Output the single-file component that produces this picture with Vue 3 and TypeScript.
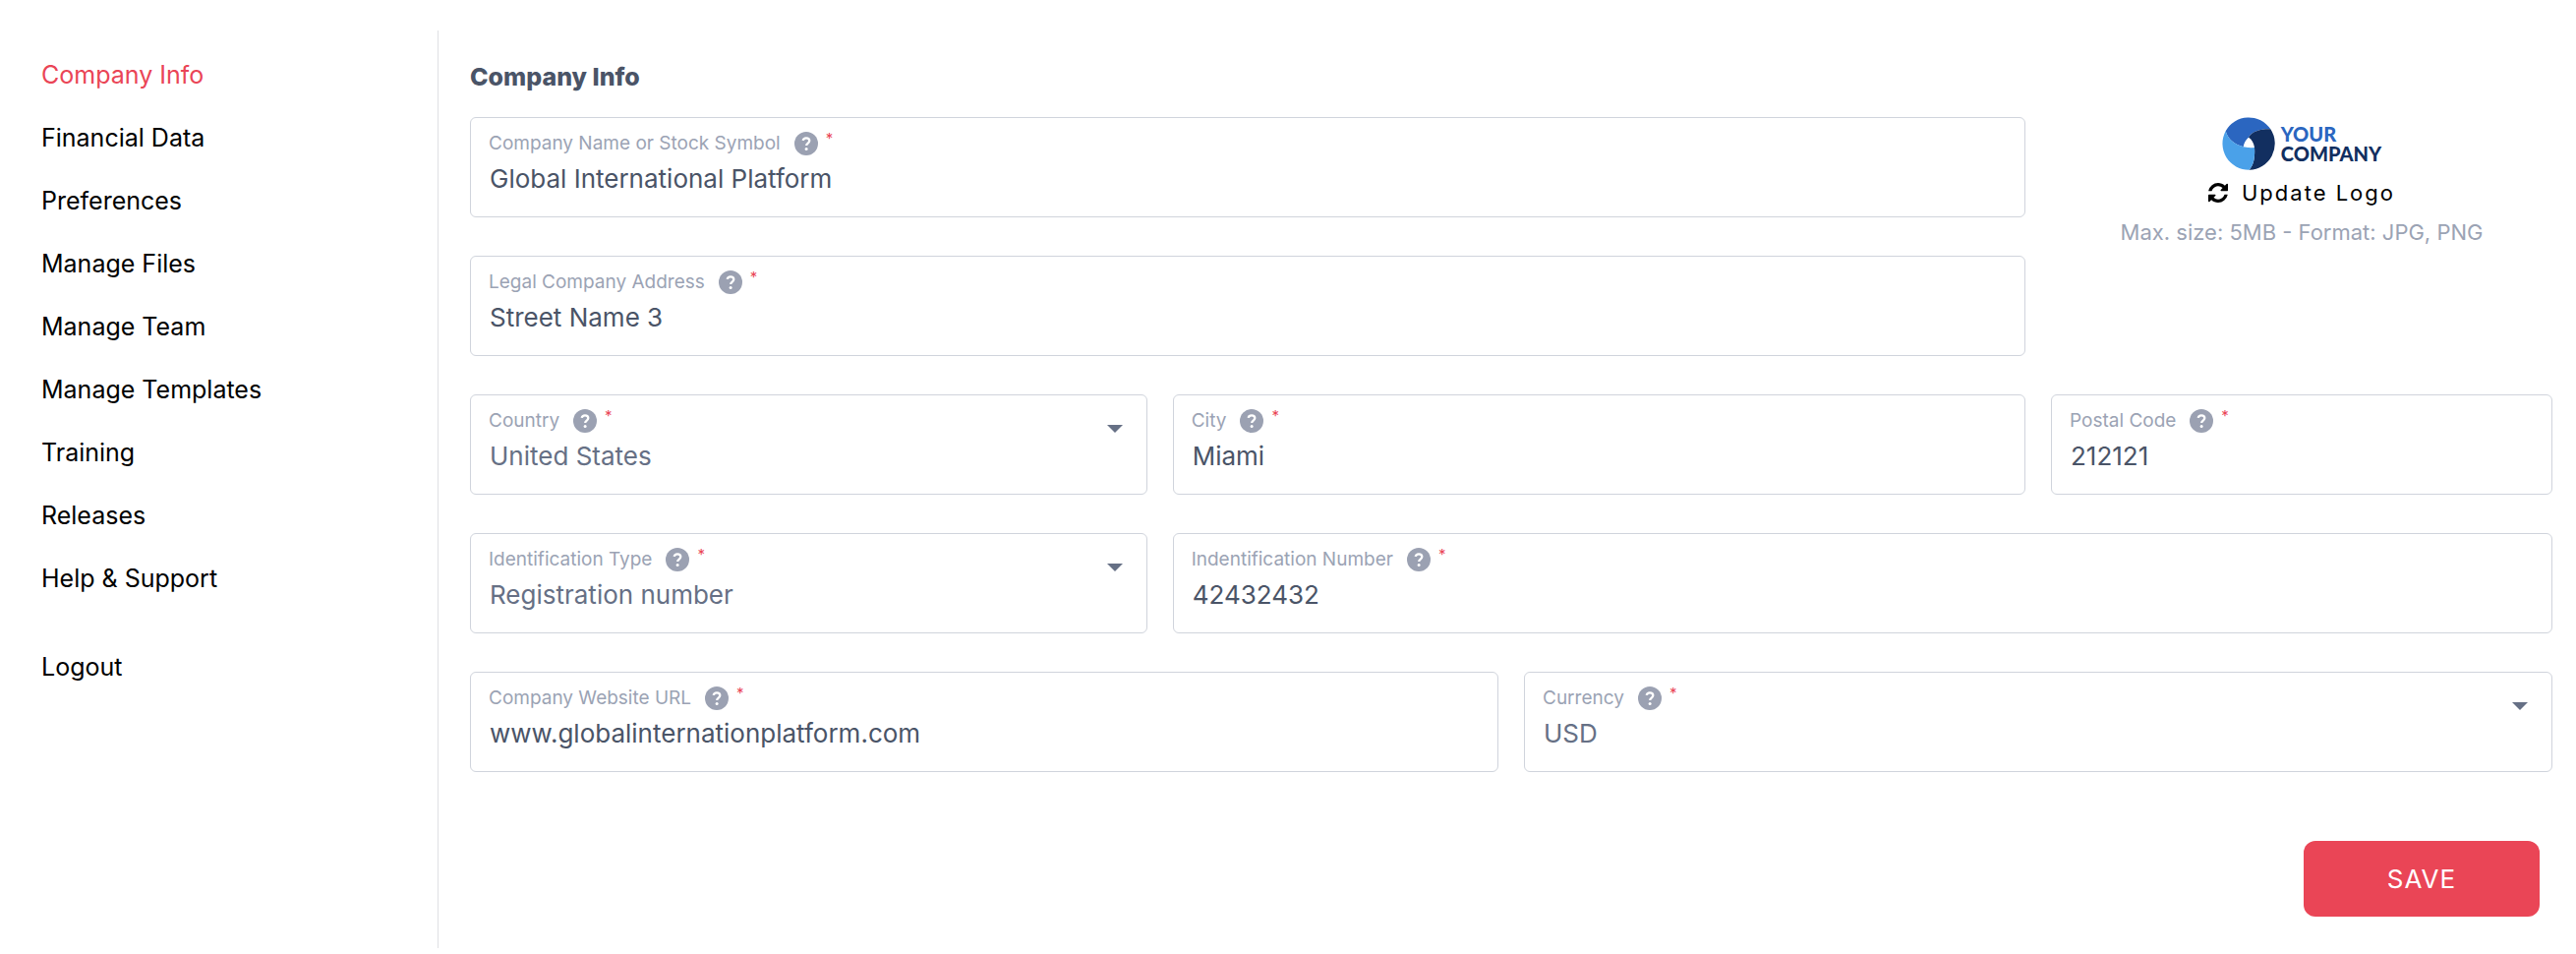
<script setup lang="ts">
import { reactive } from 'vue'

interface Field {
  id: string
  label: string
  kind: 'text' | 'select'
  size: 'three' | 'four' | 'five' | 'six' | 'eight' | 'nine'
  options?: string[]
}

const navItems: string[] = [
  'Company Info',
  'Financial Data',
  'Preferences',
  'Manage Files',
  'Manage Team',
  'Manage Templates',
  'Training',
  'Releases',
  'Help & Support',
]

const fields: Field[] = [
  { id: 'name', label: 'Company Name or Stock Symbol', kind: 'text', size: 'nine' },
  { id: 'address', label: 'Legal Company Address', kind: 'text', size: 'nine' },
  { id: 'country', label: 'Country', kind: 'select', size: 'four', options: ['United States'] },
  { id: 'city', label: 'City', kind: 'text', size: 'five' },
  { id: 'postal', label: 'Postal Code', kind: 'text', size: 'three' },
  { id: 'idType', label: 'Identification Type', kind: 'select', size: 'four', options: ['Registration number'] },
  { id: 'idNumber', label: 'Indentification Number', kind: 'text', size: 'eight' },
  { id: 'website', label: 'Company Website URL', kind: 'text', size: 'six' },
  { id: 'currency', label: 'Currency', kind: 'select', size: 'six', options: ['USD'] },
]

const values = reactive<Record<string, string>>({
  name: 'Global International Platform',
  address: 'Street Name 3',
  country: 'United States',
  city: 'Miami',
  postal: '212121',
  idType: 'Registration number',
  idNumber: '42432432',
  website: 'www.globalinternationplatform.com',
  currency: 'USD',
})
</script>

<template>
  <div class="page">
    <nav class="sidebar" aria-label="Settings">
      <a
        v-for="(item, i) in navItems"
        :key="item"
        href="#"
        class="nav-link"
        :class="{ active: i === 0 }"
      >{{ item }}</a>
      <a href="#" class="nav-link logout">Logout</a>
    </nav>

    <main class="content">
      <h1 class="title">Company Info</h1>
      <form class="form" @submit.prevent>
        <div class="grid">
          <div v-for="field in fields" :key="field.id" class="field" :class="field.size">
            <div class="field-head">
              <label class="field-label" :for="field.id">{{ field.label }}</label>
              <button type="button" class="help" :aria-label="'Help: ' + field.label">
                <svg viewBox="0 0 24 24" aria-hidden="true">
                  <circle cx="12" cy="12" r="12" fill="currentColor" />
                  <path
                    d="M8.7 8.9C9 7.200 10.200 6.300 12 6.300c2 0 3.300 1.100 3.300 2.800 0 2.500-3.100 2.400-3.100 4.900"
                    fill="none"
                    stroke="#fff"
                    stroke-width="2.300"
                  />
                  <circle cx="12.100" cy="17.600" r="1.500" fill="#fff" />
                </svg>
              </button>
              <span class="required" aria-hidden="true">*</span>
              <svg v-if="field.kind === 'select'" class="caret" viewBox="0 0 16 8" aria-hidden="true">
                <path d="M0 0h16L8 8z" fill="currentColor" />
              </svg>
            </div>
            <select v-if="field.kind === 'select'" :id="field.id" v-model="values[field.id]" class="control choice" required>
              <option v-for="o in field.options" :key="o" :value="o">{{ o }}</option>
            </select>
            <input v-else :id="field.id" v-model="values[field.id]" class="control" type="text" required />
          </div>

          <section class="logo-panel" aria-label="Company logo">
            <div class="logo">
              <svg class="logo-mark" viewBox="62 41 160 162" aria-hidden="true">
                <path d="M72 84A80 80 0 0 1 209 78C180 77 153 84 142 103C133 110 128 120 126 132C103 126 80 112 72 84Z" fill="#2b66c0" />
                <path d="M209 78A80 80 0 0 1 144 202C157 188 162 165 160 134C158 120 152 109 142 103C153 84 180 77 209 78Z" fill="#122f60" />
                <path d="M72 84C80 112 103 126 126 132C137 135 149 135 160 134C162 165 157 188 144 202A80 80 0 0 1 72 84Z" fill="#4aa1e9" />
              </svg>
              <div class="logo-text">
                <span class="logo-top">YOUR</span>
                <span class="logo-bottom">COMPANY</span>
              </div>
            </div>
            <button type="button" class="update">
              <svg class="refresh" viewBox="0 128 1536 1536" aria-hidden="true">
                <path
                  fill="currentColor"
                  d="M1511 1056q0 5-1 7-64 268-268 434.500t-478 166.500q-146 0-282.500-55t-243.500-157l-129 129q-19 19-45 19t-45-19-19-45v-448q0-26 19-45t45-19h448q26 0 45 19t19 45-19 45l-137 137q71 66 161 102t187 36q134 0 250-65t186-179q11-17 53-117 8-23 30-23h192q13 0 22.500 9.500t9.500 22.500zm25-800v448q0 26-19 45t-45 19h-448q-26 0-45-19t-19-45 19-45l138-138q-148-137-349-137-134 0-250 65t-186 179q-11 17-53 117-8 23-30 23h-199q-13 0-22.500-9.500t-9.500-22.500v-7q65-268 270-434.500t480-166.500q146 0 284 55.500t245 156.500l130-129q19-19 45-19t45 19 19 45z"
                />
              </svg>
              Update Logo
            </button>
            <p class="hint">Max. size: 5MB - Format: JPG, PNG</p>
          </section>
        </div>
        <button type="submit" class="save">SAVE</button>
      </form>
    </main>
  </div>
</template>

<style>
body {
  margin: 0;
  background: #fff;
}
</style>

<style scoped>
.page {
  box-sizing: border-box;
  min-height: 100vh;
  display: flex;
  padding: 31px 24px 6px 0;
  font-family: Inter, "Liberation Sans", sans-serif;
  font-size: 26px;
  line-height: 32px;
  color: #4a5467;
}

.sidebar {
  box-sizing: border-box;
  flex: 0 0 446px;
  display: flex;
  flex-direction: column;
  align-items: flex-start;
  gap: 32px;
  padding: 29px 24px 0 42px;
  border-right: 1px solid #dfe0e4;
}

.nav-link {
  font-size: 25px;
  color: #000;
  text-decoration: none;
}

.nav-link.active {
  color: #ea4556;
}

.logout {
  margin-top: 26px;
}

.content {
  flex: 1;
  min-width: 0;
  padding: 31px 0 0 32px;
}

.title {
  margin: 0 0 25px;
  font-size: 25px;
  line-height: 32px;
  font-weight: 800;
}

.form {
  display: flex;
  flex-direction: column;
}

.grid {
  display: grid;
  grid-template-columns: repeat(12, minmax(0, 1fr));
  gap: 39px 26px;
}

.field {
  border: 1px solid #d0d4dc;
  border-radius: 6px;
  padding: 14px 24px 22px 18px;
  display: flex;
  flex-direction: column;
  gap: 8px;
}

.three { grid-column: span 3; }
.four { grid-column: span 4; }
.five { grid-column: span 5; }
.six { grid-column: span 6; }
.eight { grid-column: span 8; }
.nine { grid-column: 1 / span 9; }

.field-head {
  display: flex;
  align-items: center;
  height: 24px;
}

.field-label {
  font-size: 19px;
  line-height: 24px;
  color: #9ba3b4;
}

.help {
  width: 24px;
  height: 24px;
  margin-left: 14px;
  padding: 0;
  border: 0;
  background: none;
  color: #9ba1b2;
  cursor: pointer;
}

.help svg {
  display: block;
  width: 24px;
  height: 24px;
}

.required {
  align-self: flex-start;
  margin-left: 8px;
  font-size: 15px;
  line-height: 14px;
  color: #ea4556;
}

.caret {
  width: 16px;
  height: 8px;
  margin-left: auto;
  align-self: flex-end;
  color: #667085;
}

.control {
  display: block;
  box-sizing: border-box;
  width: 100%;
  height: 32px;
  margin: 0;
  padding: 0 0 0 1px;
  border: 0;
  outline: 0;
  background: none;
  font: inherit;
  color: #4a5467;
}

.choice {
  appearance: none;
  color: #667085;
}

.logo-panel {
  grid-column: 10 / span 3;
  grid-row: 1 / span 2;
  display: flex;
  flex-direction: column;
  align-items: center;
}

.logo {
  display: flex;
  align-items: center;
  gap: 6px;
}

.logo-mark {
  width: 54px;
  height: 54px;
}

.logo-text {
  display: flex;
  flex-direction: column;
  font-family: Lato, "Open Sans", sans-serif;
  font-size: 20px;
  line-height: 20px;
  font-weight: 900;
}

.logo-top { color: #2b66c0; }
.logo-bottom { color: #122f60; }

.update {
  display: flex;
  align-items: center;
  gap: 14px;
  margin-top: 9px;
  padding: 0;
  border: 0;
  background: none;
  font: inherit;
  font-size: 22px;
  line-height: 28px;
  letter-spacing: 2px;
  color: #000;
  cursor: pointer;
}

.refresh {
  width: 20px;
  height: 20px;
}

.hint {
  margin: 12px 0 0;
  font-size: 22px;
  line-height: 28px;
  color: #9ba3b4;
}

.save {
  align-self: flex-end;
  width: 240px;
  height: 77px;
  margin: 70px 13px 0 0;
  border: 0;
  border-radius: 12px;
  background: #ea4556;
  color: #fff;
  font: inherit;
  letter-spacing: 1px;
  cursor: pointer;
}
</style>
